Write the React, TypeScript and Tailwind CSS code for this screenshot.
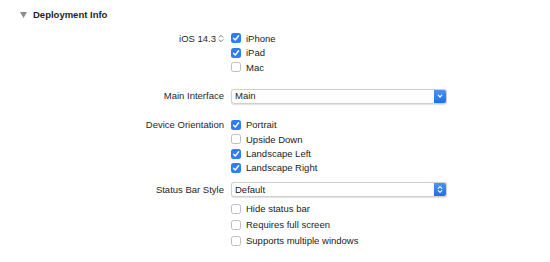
import React from 'react';

function Check({ on }: { on: boolean }) {
  if (on) {
    return (
      <span className="w-[10px] h-[10px] rounded-[2.5px] bg-[#2e7cf6] flex items-center justify-center shrink-0">
        <svg width="8" height="8" viewBox="0 0 8 8">
          <path d="M1.5 4.2 L3.3 6 L6.6 1.8" fill="none" stroke="white" strokeWidth="1.4" strokeLinecap="round" strokeLinejoin="round" />
        </svg>
      </span>
    );
  }
  return <span className="w-[10px] h-[10px] rounded-[2.5px] bg-white border border-[#bdbdbd] shrink-0" />;
}

function CheckRow({ on, label, h }: { on: boolean; label: string; h: string }) {
  return (
    <div className={`flex items-center ${h}`}>
      <div className="w-[231px] shrink-0" />
      <Check on={on} />
      <span className="ml-[5px] text-[#222]">{label}</span>
    </div>
  );
}

function Select({ value, stepper }: { value: string; stepper?: boolean }) {
  return (
    <div className="w-[216px] h-[15px] flex border border-[#cfcfcf] rounded-[3px] bg-white shadow-[0_0.5px_1px_rgba(0,0,0,0.12)] overflow-hidden">
      <span className="flex-1 pl-[3px] flex items-center text-[#222]">{value}</span>
      <span className="w-[12px] h-full bg-gradient-to-b from-[#4a93f8] to-[#1c6ff0] flex items-center justify-center">
        {stepper ? (
          <svg width="6" height="9" viewBox="0 0 6 9">
            <path d="M1.2 3.3 L3 1.6 L4.8 3.3 M1.2 5.7 L3 7.4 L4.8 5.7" fill="none" stroke="white" strokeWidth="1.1" strokeLinecap="round" strokeLinejoin="round" />
          </svg>
        ) : (
          <svg width="6" height="6" viewBox="0 0 6 6">
            <path d="M1.2 2.2 L3 4 L4.8 2.2" fill="none" stroke="white" strokeWidth="1.2" strokeLinecap="round" strokeLinejoin="round" />
          </svg>
        )}
      </span>
    </div>
  );
}

export default function App() {
  return (
    <div className="w-[550px] h-[262px] bg-white text-[9.5px] text-[#262626] font-['Liberation_Sans',Arial,sans-serif] leading-none overflow-hidden">
      {/* Section header */}
      <div className="h-[30px] flex items-center pl-[20px]">
        <svg width="7" height="6" viewBox="0 0 7 6">
          <path d="M0 0 H7 L3.5 6 Z" fill="#8c8c8c" />
        </svg>
        <span className="ml-[6px] font-bold text-[#1e1e1e]">Deployment Info</span>
      </div>

      {/* iOS target */}
      <div className="mt-[1px]">
        <div className="flex items-center h-[14.5px]">
          <div className="w-[224px] shrink-0 flex justify-end items-center">
            <span>iOS 14.3</span>
            <svg className="ml-[2px]" width="6" height="9" viewBox="0 0 6 9">
              <path d="M1 3.3 L3 1.3 L5 3.3 M1 5.7 L3 7.7 L5 5.7" fill="none" stroke="#6b6b6b" strokeWidth="0.9" strokeLinecap="round" strokeLinejoin="round" />
            </svg>
          </div>
          <div className="w-[7px] shrink-0" />
          <Check on />
          <span className="ml-[5px] text-[#222]">iPhone</span>
        </div>
        <CheckRow on label="iPad" h="h-[14.5px]" />
        <CheckRow on={false} label="Mac" h="h-[14.5px]" />
      </div>

      {/* Main interface */}
      <div className="flex items-center mt-[14px]">
        <div className="w-[224px] shrink-0 text-right">Main Interface</div>
        <div className="w-[7px] shrink-0" />
        <Select value="Main" />
      </div>

      {/* Device orientation */}
      <div className="mt-[14.5px]">
        <div className="flex items-center h-[14.3px]">
          <div className="w-[224px] shrink-0 text-right">Device Orientation</div>
          <div className="w-[7px] shrink-0" />
          <Check on />
          <span className="ml-[5px] text-[#222]">Portrait</span>
        </div>
        <CheckRow on={false} label="Upside Down" h="h-[14.3px]" />
        <CheckRow on label="Landscape Left" h="h-[14.3px]" />
        <CheckRow on label="Landscape Right" h="h-[14.3px]" />
      </div>

      {/* Status bar */}
      <div className="flex items-center mt-[7px]">
        <div className="w-[224px] shrink-0 text-right">Status Bar Style</div>
        <div className="w-[7px] shrink-0" />
        <Select value="Default" stepper />
      </div>

      <div className="mt-[3.5px]">
        <CheckRow on={false} label="Hide status bar" h="h-[16px]" />
        <CheckRow on={false} label="Requires full screen" h="h-[16px]" />
        <CheckRow on={false} label="Supports multiple windows" h="h-[16px]" />
      </div>
    </div>
  );
}
